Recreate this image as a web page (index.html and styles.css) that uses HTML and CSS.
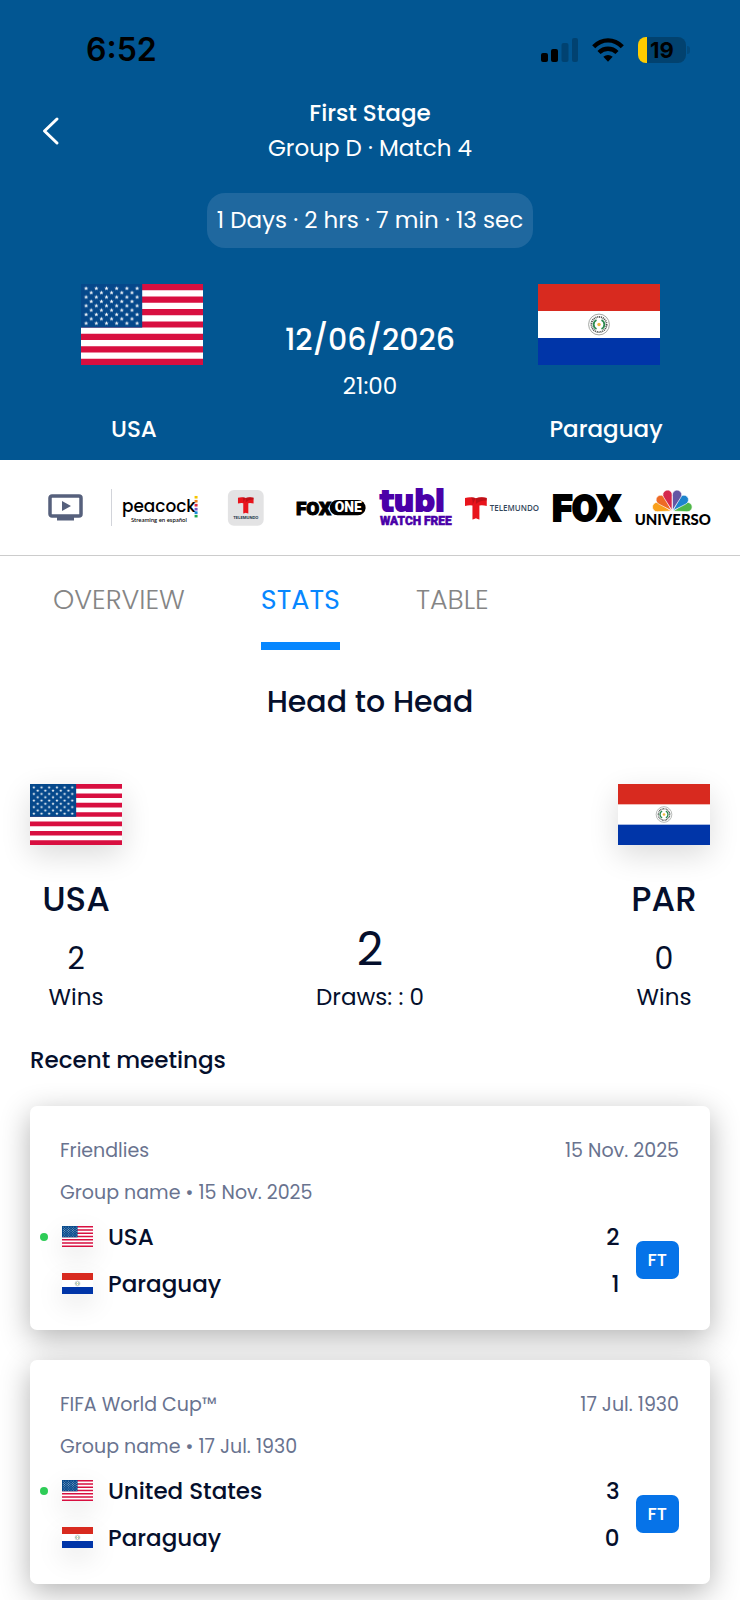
FILE: index.html
```html
<!DOCTYPE html>
<html lang="en">
<head>
<meta charset="utf-8">
<meta name="viewport" content="width=device-width, initial-scale=1">
<title>USA – Paraguay</title>
<link rel="stylesheet" href="styles.css">
</head>
<body>
<svg class="defs" width="0" height="0" aria-hidden="true">
  <defs>
    <pattern id="stars" width="10.2" height="8.72" patternUnits="userSpaceOnUse">
      <path fill="#fff" d="M5.1 2.2l.55 1.5h1.6l-1.3 1 .5 1.6-1.35-1-1.35 1 .5-1.6-1.3-1h1.6z"/>
    </pattern>
    <symbol id="flag-us" viewBox="0 0 122 81" preserveAspectRatio="none">
      <rect width="122" height="81" fill="#fff"/>
      <path stroke="#d80f40" stroke-width="6.23" d="M0 3.12h122M0 15.58h122M0 28.04h122M0 40.5h122M0 52.96h122M0 65.42h122M0 77.88h122"/>
      <rect width="61.2" height="43.6" fill="#05488b"/>
      <rect width="61.2" height="43.6" fill="url(#stars)"/>
      <g transform="translate(5.1 4.36)"><rect width="51" height="34.88" fill="url(#stars)"/></g>
    </symbol>
    <symbol id="flag-py" viewBox="0 0 122 81" preserveAspectRatio="none">
      <rect width="122" height="81" fill="#fff"/>
      <rect width="122" height="27" fill="#d82a1f"/>
      <rect y="54" width="122" height="27" fill="#0035a8"/>
      <circle cx="61" cy="40.5" r="10.4" fill="#fff" stroke="#8b8f8c" stroke-width=".8"/>
      <circle cx="61" cy="40.5" r="7.6" fill="none" stroke="#4a4f4c" stroke-width="1.8" stroke-dasharray="1.1 .8" pathLength="48"/>
      <path d="M58.5 36a5 5 0 0 0 0 9M63.500 36a5 5 0 0 1 0 9" fill="none" stroke="#2c8a50" stroke-width="1.8"/>
      <circle cx="61" cy="40.5" r="1.7" fill="#f0b840"/>
    </symbol>
    <symbol id="telemundo-t" viewBox="0 0 22 23">
      <path fill="#e8141c" d="M0 1Q6-.6 11 1.400 16-.6 22 1V9Q18 8 14.500 8.500V23L11 21.500 7.500 23V8.500Q4 8 0 9z"/>
      <path fill="#a30d14" d="M6 .3Q9 .5 11 1.400 9 4 7.500 8.500 8.500 3.500 6 .3zM11 1.400Q16-.6 22 1V3.500Q15 3 11 7z" opacity=".6"/>
    </symbol>
  </defs>
</svg>

<header class="hero">
  <div class="status">
    <time class="clock">6:52</time>
    <div class="status-icons">
      <svg class="signal" viewBox="0 0 37 24" aria-hidden="true">
        <rect y="15" width="7" height="9" rx="2"/><rect x="10" y="11" width="7" height="13" rx="2"/>
        <g opacity=".22"><rect x="20.500" y="5" width="7" height="19" rx="2"/><rect x="31" width="6" height="24" rx="2"/></g>
      </svg>
      <svg class="wifi" viewBox="0 0 32 24" aria-hidden="true">
        <g fill="none" stroke="#000" stroke-width="4.400"><path d="M1.700 8.700Q8 2.400 16 2.400T30.300 8.700"/><path d="M7 14.500Q10.800 10.800 16 10.800T25 14.500"/></g>
        <path d="M11.300 18.800Q16 15 20.700 18.800L16 23.800z"/>
      </svg>
      <div class="battery"><span>19</span></div>
    </div>
  </div>
  <div class="nav">
    <button class="back" aria-label="Back"><svg viewBox="0 0 17 28"><path d="M15 2L2.500 14 15 26"/></svg></button>
    <h1 class="stage">First Stage<span>Group D · Match 4</span></h1>
  </div>
  <p class="countdown">1 Days · 2 hrs · 7 min · 13 sec</p>
  <div class="match">
    <div class="side home"><svg class="flag-lg" role="img" aria-label="USA flag"><use href="#flag-us"/></svg><span>USA</span></div>
    <div class="when"><span class="date">12/06/2026</span><span class="hour">21:00</span></div>
    <div class="side away"><svg class="flag-lg" role="img" aria-label="Paraguay flag"><use href="#flag-py"/></svg><span>Paraguay</span></div>
  </div>
</header>

<section class="channels" aria-label="Where to watch">
  <svg class="tv" viewBox="0 0 35 27" aria-hidden="true"><rect x="2" y="2" width="31" height="20" rx="2" fill="none" stroke="#56607c" stroke-width="3.500"/><path fill="#56607c" d="M9 23h17v3.500H9zM14 7l9 5-9 5z"/></svg>
  <div class="slots">
    <svg viewBox="0 0 76 38">
      <text class="peacock" x="0" y="23">peacock</text><text class="peacock-sub" x="9" y="33">Streaming en español</text>
      <g><rect x="73" y="7" width="3" height="2.600" fill="#f6c500"/><rect x="73" y="11" width="3" height="2.600" fill="#f08020"/><rect x="73" y="15" width="3" height="2.600" fill="#e0263c"/><rect x="73" y="19" width="3" height="2.600" fill="#7a55c8"/><rect x="73" y="22.500" width="3" height="2.600" fill="#1688d8"/><rect x="73" y="26" width="3" height="2.600" fill="#20a850"/></g>
    </svg>
    <svg viewBox="0 0 76 38">
      <rect x="20" y="1" width="36" height="36" rx="6" fill="#e3e3e4"/>
      <use href="#telemundo-t" x="30" y="8" width="16" height="17"/>
      <text class="app-name" x="38" y="30" text-anchor="middle">TELEMUNDO</text>
    </svg>
    <svg viewBox="0 0 76 38">
      <rect x="37" y="11" width="36" height="15.500" rx="7.700"/>
      <text class="foxone" x="3" y="26">FOX</text><text class="foxone-one" x="42" y="23.500">ONE</text>
    </svg>
    <svg viewBox="0 0 76 38">
      <text class="tubi" x="1" y="22">tubi</text><text class="tubi-sub" x="1" y="36">WATCH FREE</text>
    </svg>
    <svg viewBox="0 0 76 38">
      <use href="#telemundo-t" x="1" y="8" width="22" height="23"/>
      <text class="telemundo" x="26" y="22">TELEMUNDO</text>
    </svg>
    <svg viewBox="0 0 76 38"><text class="fox" x="2" y="32">FOX</text></svg>
    <svg viewBox="0 0 76 38">
      <g transform="translate(37.500 22.500)" stroke="#fff" stroke-width=".6">
        <path fill="#f9a01b" transform="rotate(-74)" d="M0-1L-4.300-14A4.700 4.700 0 1 1 4.300-14z"/>
        <path fill="#4fb748" transform="rotate(74)" d="M0-1L-4.300-14A4.700 4.700 0 1 1 4.300-14z"/>
        <path fill="#ee6a25" transform="rotate(-45)" d="M0-1L-4.300-14.500A4.700 4.700 0 1 1 4.300-14.500z"/>
        <path fill="#1d83cc" transform="rotate(45)" d="M0-1L-4.300-14.500A4.700 4.700 0 1 1 4.300-14.500z"/>
        <path fill="#d5284d" transform="rotate(-16)" d="M0-1L-4.300-15.500A4.700 4.700 0 1 1 4.300-15.500z"/>
        <path fill="#6456a4" transform="rotate(16)" d="M0-1L-4.300-15.500A4.700 4.700 0 1 1 4.300-15.500z"/>
      </g>
      <text class="universo" x="38" y="36" text-anchor="middle">UNIVERSO</text>
    </svg>
  </div>
</section>

<nav class="tabs">
  <button>OVERVIEW</button>
  <button class="active" aria-current="page">STATS</button>
  <button>TABLE</button>
</nav>

<main>
  <h2 class="title">Head to Head</h2>
  <section class="h2h">
    <div class="team"><svg class="flag-md" role="img" aria-label="USA flag"><use href="#flag-us"/></svg><strong>USA</strong><b>2</b><span>Wins</span></div>
    <div class="draws"><b>2</b><span>Draws: : 0</span></div>
    <div class="team"><svg class="flag-md" role="img" aria-label="Paraguay flag"><use href="#flag-py"/></svg><strong>PAR</strong><b>0</b><span>Wins</span></div>
  </section>

  <h3 class="recent">Recent meetings</h3>
  <div class="cards">
    <article class="card">
      <div class="meta"><span>Friendlies</span><time>15 Nov. 2025</time></div>
      <p class="group">Group name • 15 Nov. 2025</p>
      <div class="result">
        <div class="rows">
          <div class="row winner"><svg class="flag-sm"><use href="#flag-us"/></svg><span>USA</span><b>2</b></div>
          <div class="row"><svg class="flag-sm"><use href="#flag-py"/></svg><span>Paraguay</span><b>1</b></div>
        </div>
        <span class="ft">FT</span>
      </div>
    </article>
    <article class="card">
      <div class="meta"><span>FIFA World Cup™</span><time>17 Jul. 1930</time></div>
      <p class="group">Group name • 17 Jul. 1930</p>
      <div class="result">
        <div class="rows">
          <div class="row winner"><svg class="flag-sm"><use href="#flag-us"/></svg><span>United States</span><b>3</b></div>
          <div class="row"><svg class="flag-sm"><use href="#flag-py"/></svg><span>Paraguay</span><b>0</b></div>
        </div>
        <span class="ft">FT</span>
      </div>
    </article>
  </div>
</main>
</body>
</html>
```
FILE: styles.css
```css
* { box-sizing: border-box; margin: 0; padding: 0; }
body {
  background: #fff;
  color: #050f2c;
  font-family: Poppins, Inter, "Open Sans", sans-serif;
  font-size: 23px;
  line-height: 32px;
}
button { border: 0; background: none; font: inherit; color: inherit; cursor: pointer; }
svg { display: block; overflow: visible; }
.defs { position: absolute; }

.hero { background: #025692; color: #fff; padding-bottom: 15px; }
.status { display: flex; align-items: center; justify-content: space-between; height: 96px; padding: 4px 49px 0 86px; color: #000; }
.clock { font: 600 32px/40px Inter, sans-serif; }
.status-icons { display: flex; align-items: center; gap: 14px; }
.signal { width: 37px; height: 24px; }
.wifi { width: 32px; height: 24px; }
.battery {
  position: relative;
  width: 48px; height: 26px;
  margin-right: 5px;
  border-radius: 8px;
  background: linear-gradient(90deg, #fc0 9px, #02426f 9px);
  font: 700 22px/26px Inter, sans-serif;
  text-align: center;
}
.battery::after { content: ""; position: absolute; right: -4px; top: 9px; width: 3px; height: 8px; border-radius: 0 3px 3px 0; background: #024a7d; }

.nav { display: grid; grid-template-columns: 104px 1fr 104px; align-items: center; }
.back { justify-self: start; padding: 8px 24px 8px 42px; }
.back svg { width: 17px; height: 28px; fill: none; stroke: #fff; stroke-width: 3; stroke-linecap: round; stroke-linejoin: round; }
.stage { font-size: 23px; font-weight: 500; line-height: 35px; text-align: center; }
.stage span { display: block; font-weight: 400; }
.countdown { width: fit-content; margin: 27px auto 36px; padding: 0 10px; border-radius: 18px; background: #1f689f; line-height: 55px; }

.match { display: grid; grid-template-columns: 268fr 204fr 268fr; }
.side { display: flex; flex-direction: column; align-items: center; gap: 48px; font-weight: 500; }
.flag-lg { width: 122px; height: 81px; }
.home .flag-lg { margin-left: 15px; }
.away .flag-lg { margin-right: 15px; }
.when { display: flex; flex-direction: column; align-items: center; gap: 10px; padding-top: 36px; }
.date { font-size: 30px; font-weight: 500; line-height: 40px; }

.channels { display: flex; align-items: center; gap: 28px; height: 96px; padding: 0 29px 0 48px; border-bottom: 1px solid #ccc; }
.tv { flex: none; width: 35px; height: 27px; }
.slots { flex: 1; display: grid; grid-template-columns: repeat(7, 1fr); gap: 10px; padding-left: 10px; border-left: 1px solid #d2d4da; }
.slots svg { width: 100%; }
.peacock { font: 500 17px Poppins, sans-serif; }
.peacock-sub { font: 500 6px Lato, sans-serif; }
.app-name { font: 700 4px Inter, sans-serif; fill: #1d3448; }
.foxone { font: 900 19px Roboto, sans-serif; stroke: #000; stroke-width: 1; }
.foxone-one { font: 900 14px Roboto, sans-serif; fill: #fff; }
.tubi { font: 700 29px "DejaVu Sans", sans-serif; fill: #4a00a8; stroke: #4a00a8; stroke-width: 2; }
.tubi-sub { font: 900 12px Roboto, sans-serif; fill: #4a00a8; stroke: #4a00a8; stroke-width: .5; }
.telemundo { font: 600 8px "Open Sans", sans-serif; fill: #33475b; }
.fox { font: 900 37px Roboto, sans-serif; stroke: #000; stroke-width: 2; }
.universo { font: 900 15px Lato, sans-serif; }

.tabs { display: flex; gap: 76px; padding: 24px 53px 0; color: #858585; font-size: 27px; font-weight: 300; line-height: 40px; }
.tabs button { padding-bottom: 22px; border-bottom: 8px solid transparent; }
.tabs .active { color: #0787ff; border-color: #0787ff; font-weight: 400; }

main { padding: 32px 30px 16px; }
.title { font-size: 30px; font-weight: 500; line-height: 40px; text-align: center; margin-bottom: 62px; }
.h2h { display: flex; justify-content: space-between; align-items: flex-end; }
.h2h > div { display: flex; flex-direction: column; align-items: center; }
.h2h span { line-height: 36px; }
.flag-md { width: 92px; height: 61px; margin-bottom: 34px; box-shadow: 0 10px 30px rgba(0, 0, 0, .14); }
.team strong { font-size: 34px; font-weight: 500; line-height: 40px; margin-bottom: 20px; }
.team b { font-size: 30px; font-weight: 400; line-height: 40px; }
.draws b { font-size: 46px; font-weight: 400; line-height: 60px; }
.recent { margin: 29px 0 30px; font-size: 23px; font-weight: 500; line-height: 32px; }

.cards { display: grid; gap: 30px; }
.card { padding: 33px 31px 23px 30px; border-radius: 7px; background: #fff; box-shadow: 0 8px 30px rgba(0, 0, 0, .3); }
.meta, .group { color: #69738f; font-size: 19px; line-height: 24px; }
.meta { display: flex; justify-content: space-between; margin-bottom: 18px; }
.group { margin-bottom: 8px; }
.result { display: flex; align-items: center; gap: 16px; }
.rows { flex: 1; }
.row { position: relative; display: flex; align-items: center; gap: 15px; height: 47px; padding-left: 2px; font-weight: 500; }
.row b { margin-left: auto; font-weight: 500; }
.winner::before { content: ""; position: absolute; left: -20px; top: 20px; width: 8px; height: 8px; border-radius: 50%; background: #2ecc57; }
.flag-sm { width: 31px; height: 21px; box-shadow: 0 10px 28px rgba(0, 0, 0, .1); }
.ft { padding: 0 12px; border-radius: 7px; background: #0673e8; color: #fff; font-size: 18px; font-weight: 500; line-height: 38px; }
```
